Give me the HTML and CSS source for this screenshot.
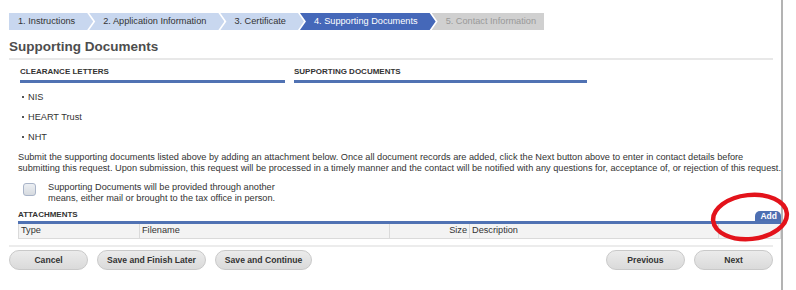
FILE: index.html
```html
<!DOCTYPE html>
<html>
<head>
  <meta charset="UTF-8">
  <title>Supporting Documents</title>
  <link rel="stylesheet" href="styles.css">
</head>
<body>
  <div class="page">
    <ul class="steps">
      <li class="step done first">1. Instructions</li>
      <li class="step done">2. Application Information</li>
      <li class="step done">3. Certificate</li>
      <li class="step active">4. Supporting Documents</li>
      <li class="step todo last">5. Contact Information</li>
    </ul>

    <h1>Supporting Documents</h1>

    <div class="lists">
      <div class="col clearance">
        <h2>Clearance Letters</h2>
        <ul class="bullets">
          <li>NIS</li>
          <li>HEART Trust</li>
          <li>NHT</li>
        </ul>
      </div>
      <div class="col supporting">
        <h2>Supporting Documents</h2>
      </div>
    </div>

    <div class="wide">
      <p class="intro">Submit the supporting documents listed above by adding an attachment below. Once all document records are added, click the Next button above to enter in contact details before submitting this request. Upon submission, this request will be processed in a timely manner and the contact will be notified with any questions for, acceptance of, or rejection of this request.</p>

      <label class="other">
        <span class="box"></span>
        <span>Supporting Documents will be provided through another<br>means, either mail or brought to the tax office in person.</span>
      </label>

      <div class="attach-head">
        <h3>Attachments</h3>
        <span class="add">Add</span>
      </div>
      <div class="table">
        <div class="c type">Type</div>
        <div class="c file">Filename</div>
        <div class="c size">Size</div>
        <div class="c desc">Description</div>
        <div class="c act"></div>
      </div>
    </div>

    <div class="actions">
      <button class="btn">Cancel</button>
      <button class="btn">Save and Finish Later</button>
      <button class="btn">Save and Continue</button>
      <span class="grow"></span>
      <button class="btn">Previous</button>
      <button class="btn">Next</button>
    </div>
  </div>

  <svg class="circle" width="90" height="60" viewBox="0 0 90 60">
    <ellipse cx="40" cy="27" rx="37" ry="22" fill="none" stroke="#e3131b" stroke-width="4.5" transform="rotate(-6 40 27)"/>
  </svg>
</body>
</html>
```

FILE: styles.css
```css
* {
  box-sizing: border-box;
  padding: 0;
  margin: 0;
}

body {
  font-family: "Liberation Sans", Arial, sans-serif;
  color: #333;
  background: #fff;
  position: relative;
}

.page {
  width: 783px;
  min-height: 290px;
  padding: 13px 8px 0 9px;
  border-right: 2px solid #b3b3b3;
}

/* wizard steps */
.steps {
  display: flex;
  list-style: none;
  height: 17px;
}

.step {
  height: 17px;
  line-height: 17px;
  font-size: 9.2px;
  padding: 0 18px 0 14px;
  margin-left: -4px;
  clip-path: polygon(0 0, calc(100% - 6px) 0, 100% 50%, calc(100% - 6px) 100%, 0 100%, 6px 50%);
}

.step.first {
  margin-left: 0;
  padding-left: 9px;
  clip-path: polygon(0 0, calc(100% - 6px) 0, 100% 50%, calc(100% - 6px) 100%, 0 100%);
}

.step.last {
  padding-right: 8px;
  clip-path: polygon(0 0, 100% 0, 100% 100%, 0 100%, 6px 50%);
}

.step.done {
  background: #c8d7ef;
  color: #333;
}

.step.active {
  background: #4568b9;
  color: #fff;
}

.step.todo {
  background: #d0d0d0;
  color: #999;
}

h1 {
  font-size: 13.5px;
  color: #4d4d4d;
  margin-top: 8px;
  height: 22px;
  line-height: 18px;
  border-bottom: 2px solid #e8e8e8;
}

/* clearance / supporting lists */
.lists {
  display: flex;
  gap: 9px;
  padding-left: 11px;
  margin-top: 7px;
}

.clearance {
  width: 265px;
}

.supporting {
  width: 293px;
}

h2 {
  font-size: 8px;
  text-transform: uppercase;
  line-height: 10px;
  color: #333;
  padding-bottom: 3px;
  border-bottom: 3px solid #5072b3;
}

.bullets {
  list-style: none;
  font-size: 9.2px;
  margin-top: 4px;
  padding-left: 2px;
}

.bullets li {
  height: 20px;
  line-height: 20px;
}

.bullets li::before {
  content: "";
  display: inline-block;
  width: 2px;
  height: 2px;
  background: #555;
  margin-right: 4px;
  vertical-align: 2px;
}

/* attachments */
.wide {
  margin-left: 9px;
  margin-right: -8px;
}

.intro {
  font-size: 9.2px;
  line-height: 11px;
  margin-top: 5px;
}

.other {
  display: flex;
  gap: 12px;
  font-size: 9.2px;
  line-height: 10.5px;
  margin: 8px 0 0 5px;
  height: 22px;
}

.box {
  width: 13px;
  height: 13px;
  margin-top: 1px;
  border: 1px solid #a9b4c8;
  border-radius: 3px;
  background: linear-gradient(#eceff3, #d6dadf);
}

.attach-head {
  display: flex;
  justify-content: space-between;
  align-items: flex-end;
  margin-top: 6px;
  border-bottom: 3px solid #5072b3;
}

h3 {
  font-size: 8px;
  text-transform: uppercase;
  line-height: 10px;
  padding-bottom: 1px;
}

.add {
  font-size: 8.5px;
  font-weight: bold;
  color: #fff;
  background: #4d6fb2;
  line-height: 10px;
  padding: 0 4px 0 5px;
  border-radius: 5px 5px 0 0;
}

.table {
  display: grid;
  grid-template-columns: 120px 250px 80px 249px 1fr;
  height: 15px;
  font-size: 9.2px;
  line-height: 13px;
  background: #f3f3f3;
  border: 1px solid #dadada;
  border-top: 0;
}

.c {
  padding: 0 2px;
  border-left: 1px solid #dadada;
}

.c.type {
  border-left: 0;
}

.c.size {
  text-align: right;
}

/* bottom buttons */
.actions {
  display: flex;
  gap: 9px;
  margin-top: 6px;
  padding-top: 3px;
  border-top: 2px solid #ececec;
}

.grow {
  flex: 1;
}

.btn {
  font-family: "Liberation Sans", Arial, sans-serif;
  font-size: 8.6px;
  font-weight: bold;
  color: #333;
  height: 20px;
  padding: 0 9px;
  min-width: 79px;
  border: 1px solid #c9c9c9;
  border-radius: 10px;
  background: linear-gradient(#ebebeb, #dadada);
}

.circle {
  position: absolute;
  left: 710px;
  top: 190px;
}
```
